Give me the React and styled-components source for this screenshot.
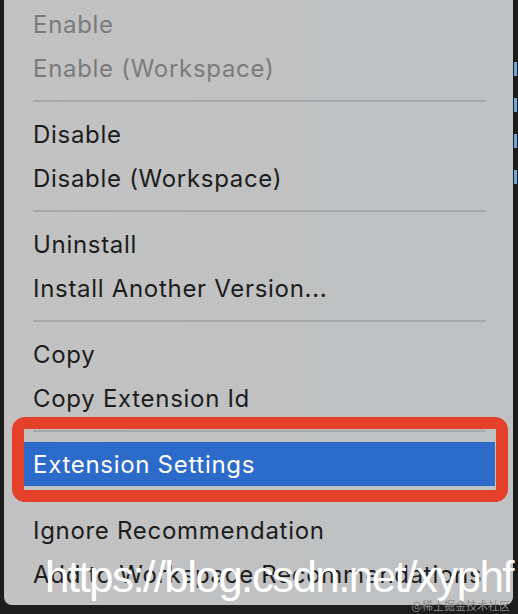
import React from 'react';
import styled, { createGlobalStyle } from 'styled-components';

const GlobalStyle = createGlobalStyle`
  html, body {
    margin: 0;
    padding: 0;
    background: #1c1c1c;
    overflow: hidden;
  }
`;

const Screen = styled.div`
  position: relative;
  display: flex;
  width: 518px;
  height: 614px;
  padding-left: 4px;
  box-sizing: border-box;
  background: #1c1c1c;
  font-family: Inter, 'Liberation Sans', sans-serif;
`;

const Menu = styled.div`
  position: relative;
  display: flex;
  flex-direction: column;
  width: 509px;
  height: 605px;
  padding: 2px 0 8px;
  box-sizing: border-box;
  background: linear-gradient(90deg, #c2c2c3 0%, #c0c1c2 60%, #bfc1c3 100%);
  border-radius: 0 0 8px 8px;
  overflow: hidden;
`;

const Item = styled.div`
  display: flex;
  align-items: center;
  height: 44px;
  flex: none;
  margin: ${(p) => (p.active ? '0 18px 0 20px' : '0')};
  padding-left: ${(p) => (p.active ? '9px' : '29px')};
  font-size: 24px;
  letter-spacing: 0.7px;
  color: ${(p) => (p.active ? '#ffffff' : p.disabled ? '#7b7b7b' : '#1c1c1c')};
  background: ${(p) => (p.active ? '#2d6bcb' : 'transparent')};
  white-space: nowrap;
`;

const Separator = styled.div`
  display: flex;
  align-items: center;
  height: 22px;
  flex: none;
  margin: 0 27px 0 29px;

  &::after {
    content: '';
    flex: 1;
    height: 2px;
    background: #a7a8a9;
  }
`;

const Annotation = styled.div`
  position: absolute;
  left: 8px;
  top: 417px;
  width: 496px;
  height: 85px;
  box-sizing: border-box;
  border: 12px solid #e5402a;
  border-radius: 13px;
  pointer-events: none;
`;

const EditorStrip = styled.div`
  display: flex;
  flex-direction: column;
  gap: 22px;
  flex: 1;
  padding-top: 62px;
  padding-left: 1px;
`;

const CodeBit = styled.span`
  display: block;
  width: 3px;
  height: 14px;
  background: #6fa6dc;
`;

const Watermark = styled.div`
  position: absolute;
  left: 45px;
  top: 552px;
  font-family: 'Liberation Sans', Arial, sans-serif;
  font-size: 44px;
  letter-spacing: -1.6px;
  color: #ffffff;
  white-space: nowrap;
  pointer-events: none;
`;

const Credit = styled.div`
  position: absolute;
  right: 8px;
  bottom: 1px;
  font-family: 'Noto Sans CJK SC', sans-serif;
  font-size: 11px;
  color: #8a8a8a;
  white-space: nowrap;
`;

const groups = [
  [
    { label: 'Enable', disabled: true },
    { label: 'Enable (Workspace)', disabled: true },
  ],
  [{ label: 'Disable' }, { label: 'Disable (Workspace)' }],
  [{ label: 'Uninstall' }, { label: 'Install Another Version...' }],
  [{ label: 'Copy' }, { label: 'Copy Extension Id' }],
  [{ label: 'Extension Settings', active: true }],
  [{ label: 'Ignore Recommendation' }, { label: 'Add to Workspace Recommendations' }],
];

export default function App() {
  return (
    <>
      <GlobalStyle />
      <Screen>
        <Menu>
          {groups.map((group, gi) => (
            <React.Fragment key={gi}>
              {gi > 0 && <Separator />}
              {group.map((item) => (
                <Item key={item.label} disabled={item.disabled} active={item.active}>
                  {item.label}
                </Item>
              ))}
            </React.Fragment>
          ))}
          <Annotation />
        </Menu>
        <EditorStrip>
          <CodeBit />
          <CodeBit />
          <CodeBit />
          <CodeBit />
        </EditorStrip>
        <Watermark>https://blog.csdn.net/xyphf</Watermark>
        <Credit>@稀土掘金技术社区</Credit>
      </Screen>
    </>
  );
}
